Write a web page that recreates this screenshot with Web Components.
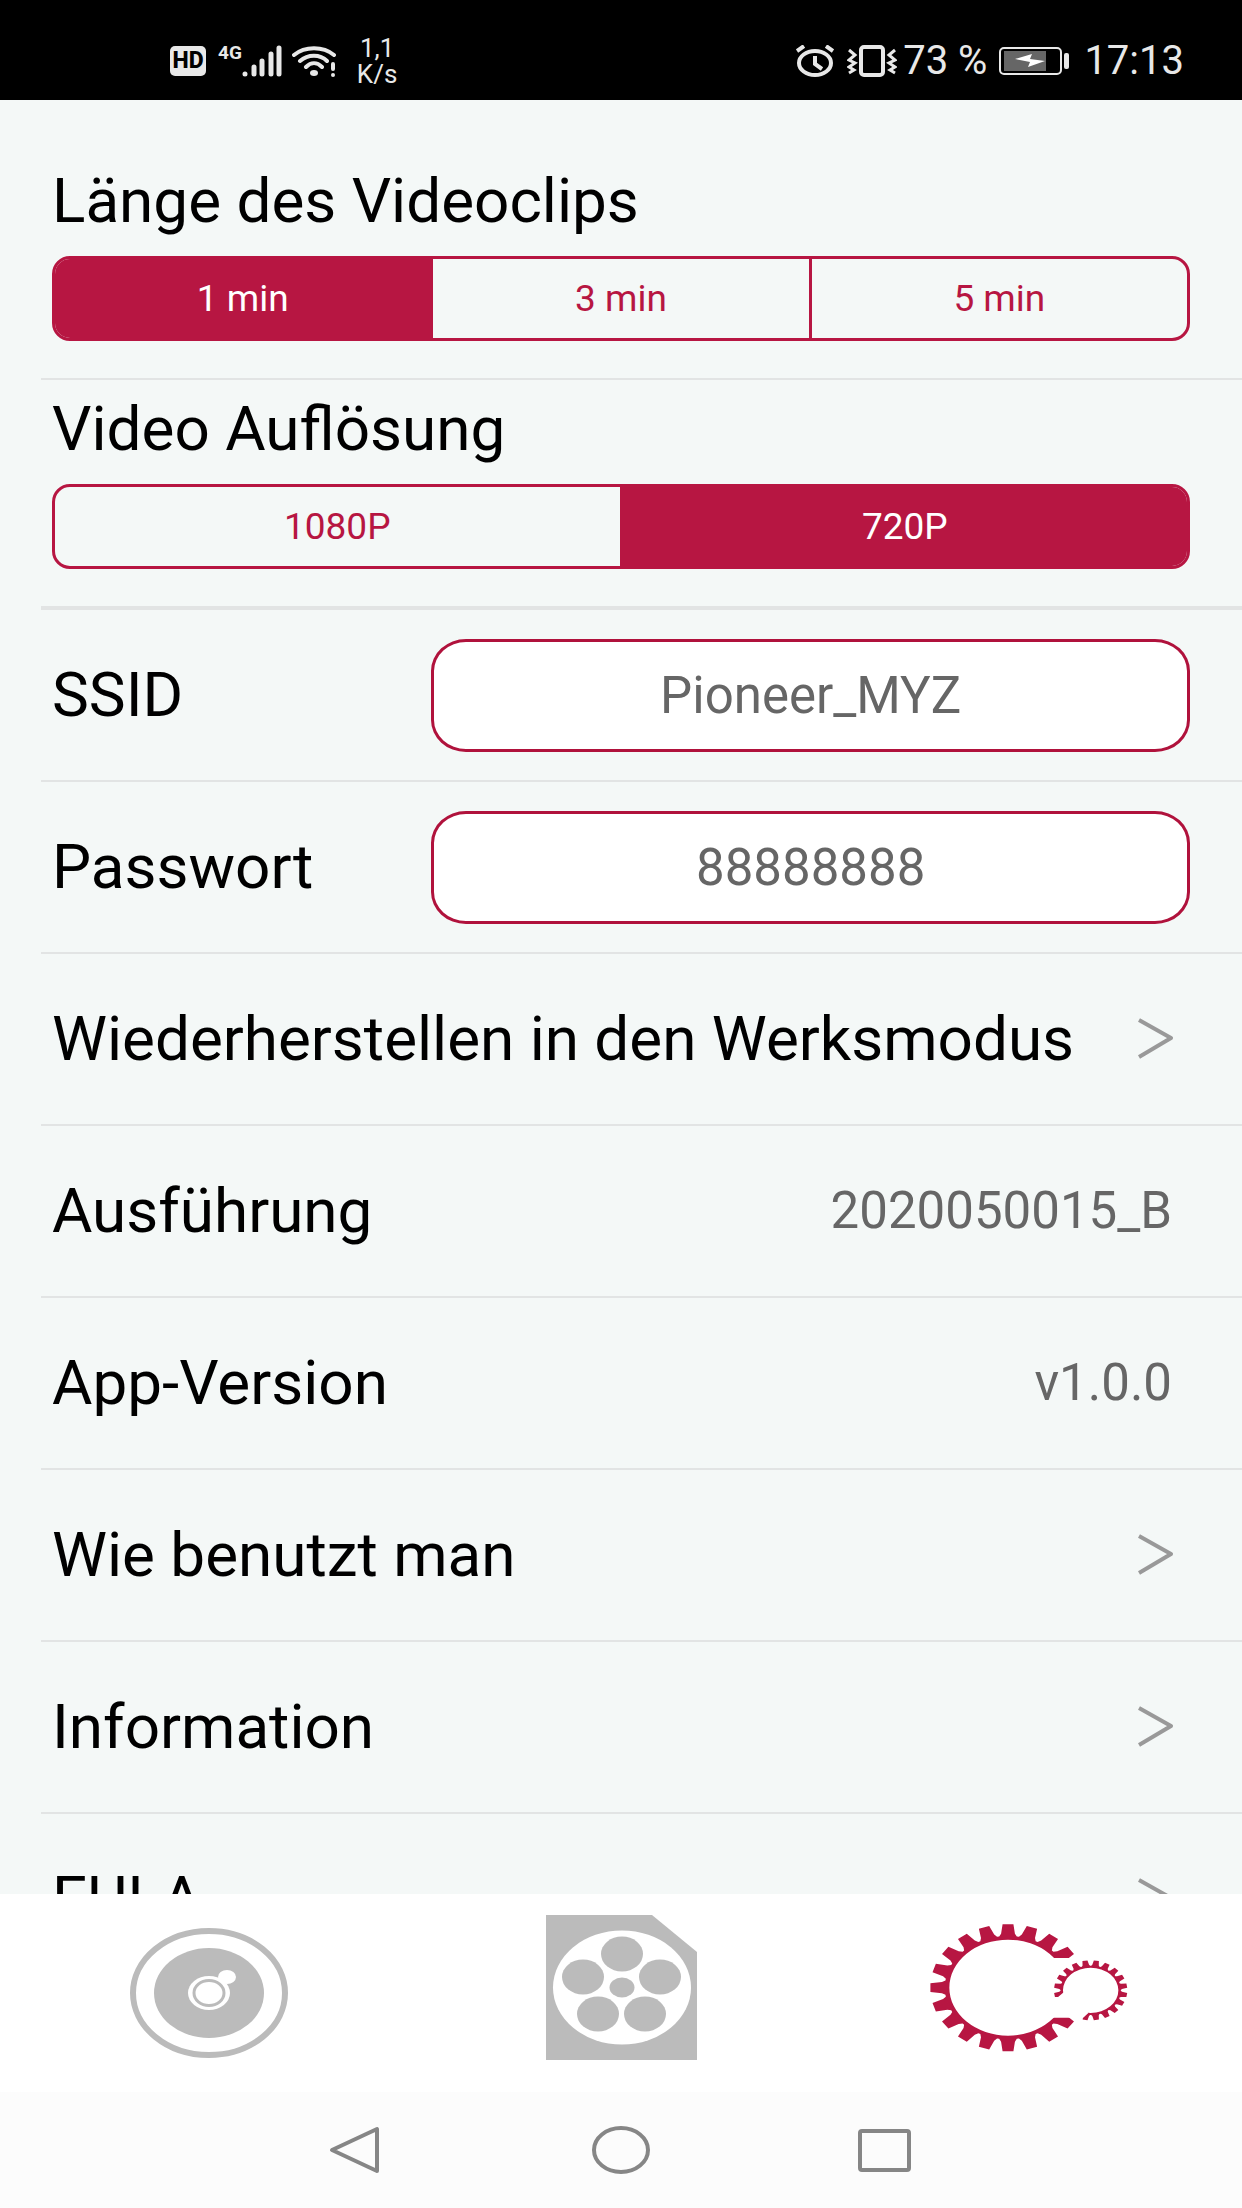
<!DOCTYPE html>
<html lang="de">
<head>
<meta charset="utf-8">
<meta name="viewport" content="width=device-width, initial-scale=1">
<title>Einstellungen</title>
<style>
html, body { margin: 0; height: 100%; }
body { font-family: Roboto, "Liberation Sans", sans-serif; background: #f4f8f7; color: #000; overflow: hidden; }
</style>
</head>
<body>
<app-screen>
  <status-bar slot="top"></status-bar>
  <setting-section heading="Länge des Videoclips" first>
    <segment-control name="length" legend="Länge des Videoclips" options="1 min|3 min|5 min" selected="0"></segment-control>
  </setting-section>
  <setting-section heading="Video Auflösung" last>
    <segment-control name="resolution" legend="Video Auflösung" options="1080P|720P" selected="1"></segment-control>
  </setting-section>
  <field-row label="SSID" value="Pioneer_MYZ"></field-row>
  <field-row label="Passwort" value="88888888"></field-row>
  <link-row>Wiederherstellen in den Werksmodus</link-row>
  <value-row>Ausführung<span slot="value">2020050015_B</span></value-row>
  <value-row>App-Version<span slot="value">v1.0.0</span></value-row>
  <link-row>Wie benutzt man</link-row>
  <link-row>Information</link-row>
  <link-row>EULA</link-row>
  <tab-bar slot="bottom"></tab-bar>
  <system-nav slot="bottom"></system-nav>
</app-screen>

<script>
const define = (name, render) => customElements.define(name, class extends HTMLElement {
  constructor() { super(); this.attachShadow({ mode: 'open' }); }
  connectedCallback() { this.shadowRoot.innerHTML = render(this); }
});

const rowStyle = `
  :host { display: block; flex: none; margin-left: 41px; border-bottom: 2px solid #e2e4e4; }
  .row { display: flex; align-items: center; justify-content: space-between; height: 170px; box-sizing: border-box; padding: 0 52px 0 11px; font-size: 62px; line-height: 74px; color: #000; text-decoration: none; white-space: nowrap; }
`;

define('app-screen', () => `
  <style>
    :host { display: flex; flex-direction: column; height: 100vh; }
    main { flex: 1; min-height: 0; overflow: hidden; display: flex; flex-direction: column; background: #f4f8f7; }
  </style>
  <slot name="top"></slot>
  <main><slot></slot></main>
  <slot name="bottom"></slot>`);

define('status-bar', () => `
  <style>
    :host { display: flex; flex: none; align-items: center; justify-content: space-between; height: 100px; box-sizing: border-box; padding: 22px 58px 0 170px; background: #000; color: #e8e8e8; }
    div { display: flex; align-items: center; }
    svg { display: block; flex: none; }
    .hd { width: 36px; height: 30px; border-radius: 5px; background: #e8e8e8; color: #000; font-size: 23px; line-height: 30px; font-weight: 800; text-align: center; }
    .net { align-items: flex-start; margin-left: 12px; }
    .net span { font-size: 19px; line-height: 16px; font-weight: 700; }
    .wifi { margin-left: 9px; }
    .rate { margin-left: 20px; font-size: 26px; line-height: 26px; text-align: center; }
    .big { font-size: 40px; line-height: 44px; white-space: nowrap; }
    .vib { margin-left: 13px; }
    .pct { margin-left: 6px; }
    .bat { margin: 0 14px 0 12px; }
  </style>
  <div>
    <span class="hd">HD</span>
    <div class="net"><span>4G</span>
      <svg width="41" height="32" viewBox="0 0 41 32" stroke="#e8e8e8" stroke-width="5" stroke-linecap="round"><path d="M3 29v0M12 22v7M20 16v13M29 9v20M37 3v26"/></svg>
    </div>
    <svg class="wifi" width="45" height="32" viewBox="0 0 45 32" fill="none" stroke="#e8e8e8" stroke-width="4" stroke-linecap="round">
      <path d="M2 10C13 1 31 1 42 10M8 16C16 9 28 9 35 16M14 22C19 17 25 17 30 22M41 19v5"/><ellipse cx="22" cy="28" rx="4" ry="3" fill="#e8e8e8" stroke="none"/><circle cx="41" cy="30" r="2" fill="#e8e8e8" stroke="none"/>
    </svg>
    <div class="rate">1,1<br>K/s</div>
  </div>
  <div>
    <svg width="38" height="32" viewBox="0 0 38 32" fill="none" stroke="#e8e8e8" stroke-width="4"><ellipse cx="19" cy="18" rx="16" ry="12"/><path d="M19 11v8l7 5M1 6l7-5M37 6l-7-5"/></svg>
    <svg class="vib" width="50" height="32" viewBox="0 0 50 32" fill="none" stroke="#e8e8e8" stroke-width="4"><rect x="14" y="2" width="22" height="28" rx="3"/><path stroke-width="3" d="M2 5l6 5-6 5 6 3-6 4 5 3-5 3M48 5l-6 5 6 5-6 3 6 4-5 3 5 3"/></svg>
    <span class="big pct">73 %</span>
    <svg class="bat" width="71" height="28" viewBox="0 0 71 28"><rect x="1" y="1" width="61" height="26" rx="4" fill="none" stroke="#e8e8e8" stroke-width="2"/><rect x="5" y="4" width="42" height="20" fill="#666"/><path d="M16 12L33 7L31 12L46 14L29 20L31 15Z" fill="#fff"/><rect x="65" y="6" width="5" height="16" rx="2" fill="#e8e8e8"/></svg>
    <span class="big">17:13</span>
  </div>`);

define('setting-section', el => `
  <style>
    :host { display: block; flex: none; margin-left: 41px; padding: 12px 52px 37px 11px; border-bottom: 2px solid #e2e4e4; }
    :host([first]) { padding-top: 64px; }
    :host([last]) { border-bottom-width: 4px; }
    h2 { margin: 0 0 18px; font-size: 62px; line-height: 74px; font-weight: 400; }
  </style>
  <h2>${el.getAttribute('heading')}</h2>
  <slot></slot>`);

define('segment-control', el => {
  const name = el.getAttribute('name');
  const selected = +el.getAttribute('selected');
  return `
  <style>
    :host { display: block; }
    .group { display: flex; height: 85px; box-sizing: border-box; border: 3px solid #b71642; border-radius: 18px; overflow: hidden; }
    input { appearance: none; position: absolute; margin: 0; width: 0; height: 0; }
    label { flex: 1; display: flex; align-items: center; justify-content: center; font-size: 37px; line-height: 44px; color: #b71642; cursor: pointer; }
    label + input + label { border-left: 3px solid #b71642; }
    input:checked + label { background: #b71642; color: #fff; }
    input:focus-visible + label { text-decoration: underline; }
  </style>
  <div class="group" role="radiogroup" aria-label="${el.getAttribute('legend')}">
    ${el.getAttribute('options').split('|').map((o, i) =>
      `<input type="radio" name="${name}" id="o${i}"${i === selected ? ' checked' : ''}><label for="o${i}">${o}</label>`).join('')}
  </div>`;
});

define('field-row', el => `
  <style>${rowStyle}
    input { width: calc(100% * 2 / 3); height: 113px; box-sizing: border-box; margin: 0; padding: 0 30px; border: 3px solid #b0123c; border-radius: 35px / 32px; background: #fff; color: #666; font: 51px Roboto, "Liberation Sans", sans-serif; text-align: center; outline: none; }
  </style>
  <div class="row"><label for="field">${el.getAttribute('label')}</label><input id="field" type="text" value="${el.getAttribute('value')}"></div>`);

define('link-row', () => `
  <style>${rowStyle}
    .row { padding-right: 68px; }
    svg { display: block; flex: none; }
  </style>
  <a class="row" href="#"><span><slot></slot></span><svg width="36" height="42" viewBox="0 0 36 42" fill="none" stroke="#999" stroke-width="4" stroke-linejoin="round" aria-hidden="true"><path d="M1 2L33 20L1 39"/></svg></a>`);

define('value-row', () => `
  <style>${rowStyle}
    .row { padding-right: 70px; }
    .value { font-size: 51px; color: #666; }
  </style>
  <div class="row"><span><slot></slot></span><span class="value"><slot name="value"></slot></span></div>`);

/* Outline of a 20-tooth gear with a round hole, centred on the origin. */
const gear = (tip, shoulder, root, hole, offset) => {
  const at = (r, deg) => {
    const a = deg * Math.PI / 180;
    return (r * Math.cos(a)).toFixed(1) + ' ' + (r * Math.sin(a)).toFixed(1);
  };
  const pts = [];
  for (let i = 0; i < 20; i++) {
    const a = i * 18 + offset;
    pts.push(at(root, a - 8), at(shoulder, a - 6), at(tip, a - 4), at(tip, a + 4), at(shoulder, a + 6), at(root, a + 8));
  }
  return `M${pts.join('L')}ZM${hole} 0A${hole} ${hole} 0 1 0 -${hole} 0A${hole} ${hole} 0 1 0 ${hole} 0Z`;
};

define('tab-bar', () => `
  <style>
    :host { display: block; flex: none; background: #fff; }
    nav { display: grid; grid-template-columns: repeat(3, 1fr); height: 198px; }
    button { display: flex; align-items: center; justify-content: center; margin: 0; padding: 0; border: 0; background: none; cursor: pointer; }
    svg { display: block; }
  </style>
  <nav>
    <button aria-label="Kamera"><svg width="240" height="198" viewBox="0 0 240 198">
      <ellipse cx="122" cy="99" rx="76" ry="62" fill="none" stroke="#bbb" stroke-width="6"/>
      <ellipse cx="122" cy="99" rx="55" ry="45" fill="#bbb"/>
      <ellipse cx="140" cy="83" rx="9" ry="7" fill="#fff"/>
      <ellipse cx="122" cy="99" rx="21" ry="17" fill="#fff"/>
      <ellipse cx="122" cy="99" rx="15" ry="12.5" fill="#fff" stroke="#bbb" stroke-width="3"/>
    </svg></button>
    <button aria-label="Videos"><svg width="240" height="198" viewBox="0 0 240 198" fill="#bbb">
      <path d="M45 21H151L196 58V166H45Z"/>
      <ellipse cx="121" cy="93.5" rx="69" ry="57" fill="#fff"/>
      <ellipse cx="121" cy="60" rx="21" ry="17.5"/><ellipse cx="82" cy="83" rx="21" ry="17.5"/><ellipse cx="159" cy="83" rx="21" ry="17.5"/>
      <ellipse cx="97" cy="120" rx="21" ry="17.5"/><ellipse cx="144" cy="120" rx="21" ry="17.5"/><ellipse cx="121" cy="93.5" rx="12.5" ry="10"/>
    </svg></button>
    <button aria-label="Einstellungen" aria-current="page"><svg width="240" height="198" viewBox="15 -18 720 594" fill="#b71642" fill-rule="evenodd">
      <clipPath id="big"><path d="M0 0H720V174H400V353H720V540H0Z"/></clipPath>
      <clipPath id="small"><path d="M400 150H720V400H510L518 355L535 339L520 320L480 300L462 276L438 296H400Z"/></clipPath>
      <g clip-path="url(#big)"><path transform="translate(294 263) scale(1.222 1)" d="${gear(191, 163, 155, 144, 0)}"/></g>
      <g clip-path="url(#small)"><path transform="translate(542 271) scale(1.222 1)" d="${gear(90, 77, 74, 68, 9)}"/></g>
    </svg></button>
  </nav>`);

define('system-nav', () => `
  <style>
    :host { display: block; flex: none; background: #fcfcfc; }
    nav { display: grid; grid-template-columns: repeat(3, 1fr); height: 116px; padding: 0 18%; }
    button { display: flex; align-items: center; justify-content: center; margin: 0; padding: 0; border: 0; background: none; cursor: pointer; }
    svg { display: block; fill: none; stroke: #868686; stroke-width: 4; stroke-linejoin: round; }
  </style>
  <nav>
    <button aria-label="Zurück"><svg width="60" height="50" viewBox="0 0 60 50"><path d="M6 25L51 4V46Z"/></svg></button>
    <button aria-label="Startbildschirm"><svg width="60" height="50" viewBox="0 0 60 50"><ellipse cx="30" cy="25" rx="27" ry="22"/></svg></button>
    <button aria-label="Übersicht"><svg width="60" height="50" viewBox="0 0 60 50"><rect x="4" y="6" width="49" height="39" rx="2"/></svg></button>
  </nav>`);
</script>
</body>
</html>
